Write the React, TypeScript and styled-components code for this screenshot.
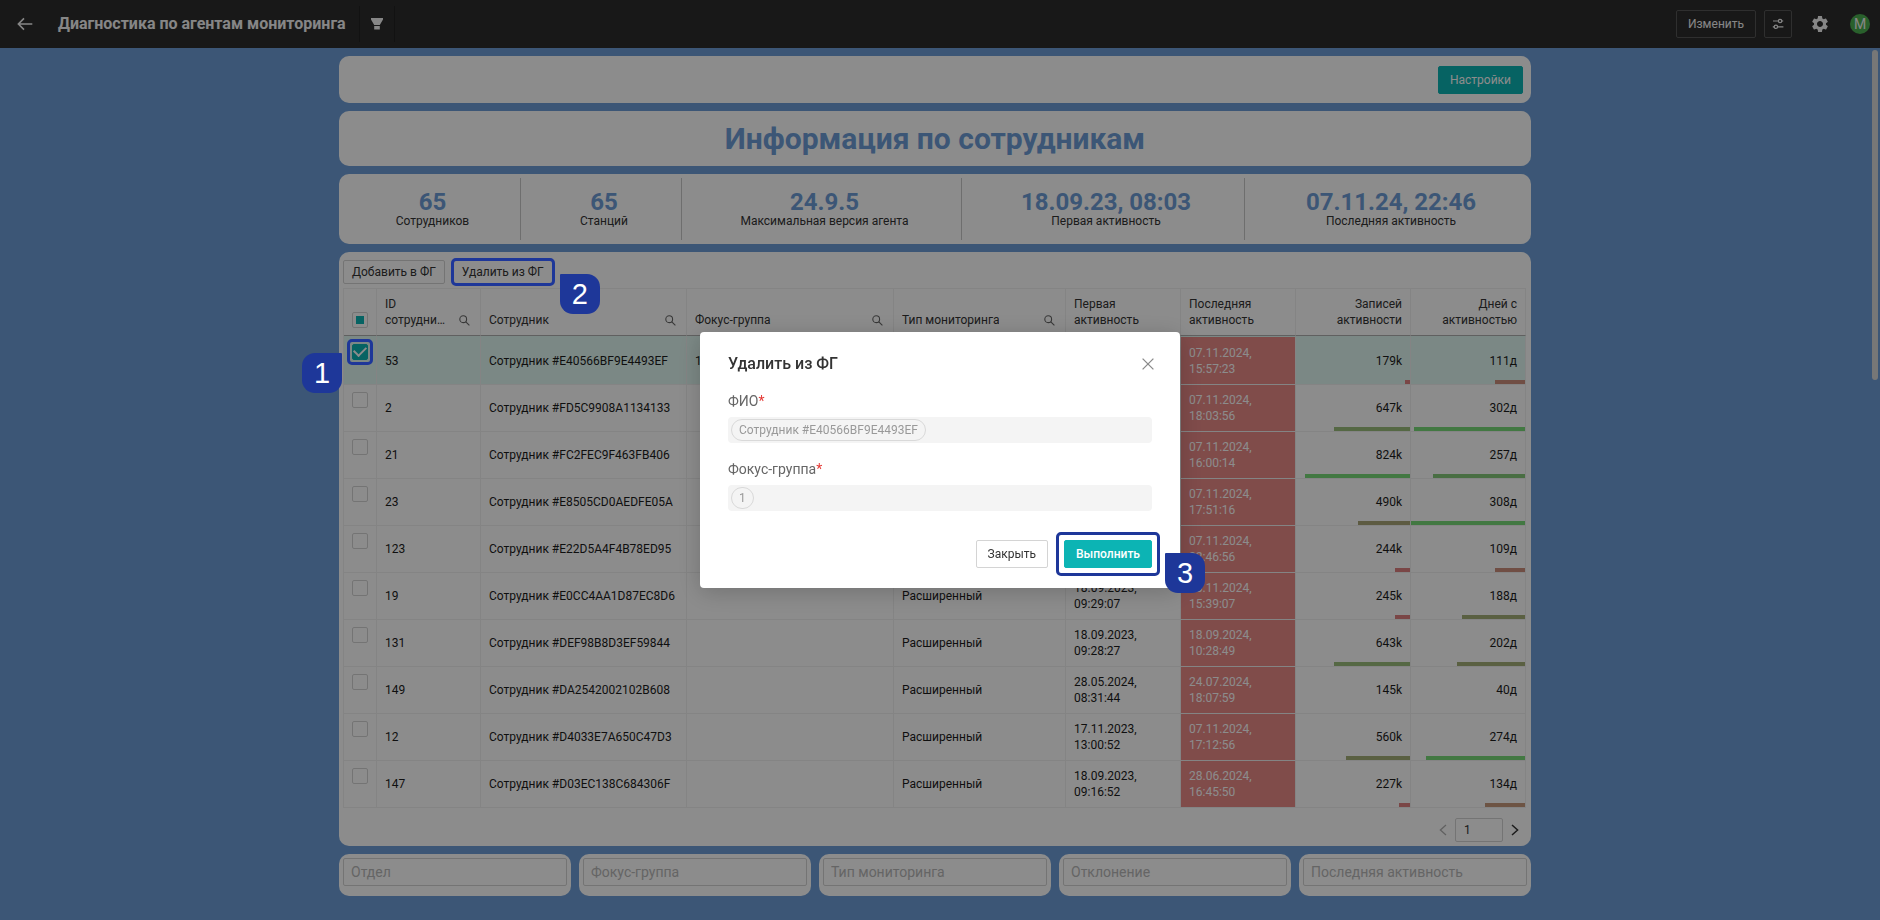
import React from 'react';
import styled, { createGlobalStyle, css } from 'styled-components';
import { MdSettings } from 'react-icons/md';

const color = {
  page: '#6d9dd7',
  header: '#2d2d2d',
  accent: '#0cb4b4',
  mark: '#1e3799',
  line: '#f0f0f0',
  border: '#d4d4d4',
  text: '#333333',
};

const GlobalStyle = createGlobalStyle`
  * { box-sizing: border-box; }
  body {
    margin: 0;
    background: ${color.page};
    color: ${color.text};
    font: 12px/16px Roboto, "Noto Sans", sans-serif;
  }
  button, input { font: inherit; color: inherit; margin: 0; }
  h1, h2, p { margin: 0; }
`;

const Page = styled.div`
  min-height: 100vh;
  display: flex;
  flex-direction: column;
`;

const Header = styled.header`
  height: 48px;
  padding: 0 10px 0 16px;
  display: flex;
  align-items: center;
  background: ${color.header};
  color: #f5f5f5;
`;

const HeaderTitle = styled.h1`
  margin: 0 13px 0 24px;
  font-size: 16px;
  line-height: 24px;
  font-weight: 700;
`;

const IconButton = styled.button`
  display: flex;
  padding: 0;
  border: 0;
  background: none;
  cursor: pointer;
`;

const FilterSlot = styled.div`
  height: 36px;
  width: 36px;
  display: flex;
  align-items: center;
  justify-content: center;
  border: solid #222222;
  border-width: 0 1px;
`;

const HeaderActions = styled.div`
  margin-left: auto;
  display: flex;
  align-items: center;
  gap: 8px;
`;

const OutlineDarkButton = styled.button<{ $square?: boolean }>`
  height: 28px;
  width: ${(p) => (p.$square ? '28px' : '80px')};
  padding: 0;
  display: flex;
  align-items: center;
  justify-content: center;
  border: 1px solid #565656;
  border-radius: 2px;
  background: none;
`;

const GearButton = styled(IconButton)`
  margin: 0 12px 0 10px;
`;

const Avatar = styled.div`
  width: 20px;
  height: 20px;
  border-radius: 50%;
  background: #4caf50;
  font-size: 14px;
  line-height: 20px;
  text-align: center;
`;

const Body = styled.div`
  flex: 1;
  display: flex;
`;

const Main = styled.main`
  flex: 1;
  max-width: 1192px;
  margin: 8px auto;
  display: flex;
  flex-direction: column;
  gap: 8px;
`;

const ScrollTrack = styled.div`
  width: 10px;
  padding: 2px;
`;

const ScrollThumb = styled.div`
  width: 6px;
  height: 330px;
  border-radius: 3px;
  background: #d9d9d9;
`;

const Card = styled.section`
  border-radius: 10px;
  background: #ffffff;
`;

const ActionCard = styled(Card)`
  padding: 10px 8px 9px;
  display: flex;
  justify-content: flex-end;
`;

const Button = styled.button<{ $primary?: boolean; $small?: boolean }>`
  height: ${(p) => (p.$small ? '24px' : '28px')};
  padding: 0 ${(p) => (p.$small ? '8px' : '11px')};
  border: 1px solid ${color.border};
  border-radius: 2px;
  background: #ffffff;
  cursor: pointer;
  ${(p) =>
    p.$primary &&
    css`
      border-color: ${color.accent};
      background: ${color.accent};
      color: #ffffff;
    `}
`;

const TitleCard = styled(Card)`
  height: 55px;
  display: flex;
  align-items: center;
  justify-content: center;
`;

const SectionTitle = styled.h2`
  font-size: 30px;
  line-height: 36px;
  font-weight: 700;
  color: ${color.page};
`;

const StatsCard = styled(Card)`
  padding: 4px 0;
  display: grid;
  grid-template-columns: 182fr 161fr 280fr 283fr 286fr;
`;

const Stat = styled.div`
  height: 62px;
  padding: 11px 0 0 6px;
  text-align: center;
  border-right: 1px solid #c8c8c8;
  &:last-child {
    border-right: 0;
  }
`;

const StatValue = styled.div`
  font-size: 24px;
  line-height: 26px;
  font-weight: 700;
  color: ${color.page};
`;

const StatLabel = styled.p`
  line-height: 12px;
`;

const TableCard = styled(Card)`
  padding: 8px 5px 4px 4px;
`;

const Toolbar = styled.div`
  display: flex;
  gap: 8px;
  margin-bottom: 4px;
`;

const Marked = styled.span`
  position: relative;
  display: inline-flex;
  vertical-align: top;
`;

const Ring = styled.span<{ $gap: number }>`
  position: absolute;
  z-index: 20;
  inset: -${(p) => p.$gap}px;
  border: 3px solid ${color.mark};
  border-radius: 5px;
  pointer-events: none;
`;

const Badge = styled.span<{ $side: 'left' | 'right' }>`
  position: absolute;
  z-index: 20;
  top: calc(100% - 10px);
  ${(p) => (p.$side === 'left' ? 'right: calc(100% + 10px);' : 'left: calc(100% + 7px);')}
  width: 40px;
  height: 40px;
  border-radius: ${(p) => (p.$side === 'left' ? '13px 1px 13px 13px' : '1px 13px 13px 13px')};
  background: ${color.mark};
  color: #ffffff;
  font: 29px/41px "Liberation Sans", sans-serif;
  text-align: center;
`;

const RowBadge = styled(Badge)`
  top: 9px;
`;

const DialogBadge = styled(Badge)`
  top: 13px;
  left: calc(100% + 13px);
`;

const Table = styled.table`
  width: 100%;
  table-layout: fixed;
  border-collapse: separate;
  border-spacing: 0;
  border: solid ${color.line};
  border-width: 1px 0 0 1px;
`;

const Th = styled.th<{ $right?: boolean }>`
  height: 47px;
  padding: 7px 8px;
  border-right: 1px solid ${color.line};
  border-bottom: 1px solid #b0b0b0;
  font-weight: 400;
  vertical-align: bottom;
  text-align: ${(p) => (p.$right ? 'right' : 'left')};
`;

const ThInner = styled.div`
  display: flex;
  align-items: flex-end;
  justify-content: space-between;
  gap: 12px;
  padding-right: 2px;
  svg {
    flex: none;
    margin-bottom: 2px;
  }
`;

const Clip = styled.span`
  overflow: hidden;
  text-overflow: ellipsis;
`;

const Td = styled.td<{ $right?: boolean; $alert?: boolean; $top?: boolean }>`
  position: relative;
  padding: 0 8px;
  border-right: 1px solid ${color.line};
  border-bottom: 1px solid ${color.line};
  color: #1c1c1c;
  text-align: ${(p) => (p.$right ? 'right' : 'left')};
  ${(p) =>
    p.$top &&
    css`
      padding-top: 7px;
      vertical-align: top;
    `}
  ${(p) =>
    p.$alert &&
    css`
      background: #e98a88;
      background-clip: padding-box;
      color: #ffffff;
    `}
`;

const Tr = styled.tr<{ $selected?: boolean }>`
  height: 47px;
  background: ${(p) => (p.$selected ? '#e1f8f2' : 'none')};
  &:first-child {
    height: 49px;
  }
  &:first-child > ${Td} {
    border-top: 1px solid transparent;
  }
`;

const Bar = styled.span`
  position: absolute;
  right: 0;
  bottom: 0;
  height: 4px;
`;

const Check = styled.input`
  appearance: none;
  display: grid;
  place-items: center;
  width: 16px;
  height: 16px;
  border: 1px solid ${color.border};
  border-radius: 2px;
  background: #ffffff;
  &:checked {
    border-color: ${color.accent};
    background: ${color.accent};
  }
  &:checked::after {
    content: '';
    width: 10px;
    height: 6px;
    margin-bottom: 4px;
    border: solid #ffffff;
    border-width: 0 0 2px 2px;
    rotate: -45deg;
  }
`;

const CheckAll = styled(Check)`
  &::after {
    content: '';
    width: 8px;
    height: 8px;
    background: ${color.accent};
  }
`;

const Pager = styled.nav`
  display: flex;
  align-items: center;
  justify-content: flex-end;
  gap: 8px;
  margin-top: 10px;
  padding-right: 7px;
`;

const PageInput = styled.input`
  width: 48px;
  height: 24px;
  padding: 0 8px;
  border: 1px solid ${color.border};
  border-radius: 2px;
  background: none;
`;

const Filters = styled.div`
  display: grid;
  grid-template-columns: repeat(5, 1fr);
  gap: 8px;
`;

const FilterCard = styled(Card)`
  padding: 4px 4px 10px;
`;

const FilterInput = styled.input`
  display: block;
  width: 100%;
  height: 28px;
  padding: 0 7px;
  border: 1px solid ${color.border};
  border-radius: 2px;
  background: none;
  font-size: 14px;
  line-height: 20px;
  &::placeholder {
    color: #b8b8b8;
    opacity: 1;
  }
`;

const Overlay = styled.div`
  position: fixed;
  inset: 0;
  z-index: 10;
  display: flex;
  align-items: center;
  justify-content: center;
  background: rgba(0, 0, 0, 0.45);
`;

const Dialog = styled.div`
  width: 480px;
  padding: 20px 28px;
  border-radius: 4px;
  background: #ffffff;
  box-shadow: 0 4px 24px rgba(0, 0, 0, 0.2);
`;

const DialogHead = styled.div`
  display: flex;
  align-items: center;
  justify-content: space-between;
  margin-bottom: 15px;
`;

const DialogTitle = styled.h2`
  font-size: 16px;
  line-height: 24px;
  font-weight: 500;
`;

const CloseButton = styled(IconButton)`
  margin-right: -2px;
`;

const Field = styled.div`
  margin-bottom: 16px;
`;

const FieldLabel = styled.div`
  margin-bottom: 6px;
  font-size: 14px;
  line-height: 20px;
  color: #666666;
  em {
    font-style: normal;
    color: #e53935;
  }
`;

const TagBox = styled.div`
  display: flex;
  padding: 2px 3px;
  border-radius: 4px;
  background: #f4f4f4;
`;

const Tag = styled.span`
  padding: 2px 7px;
  border: 1px solid #d9d9d9;
  border-radius: 11px;
  color: #999999;
  line-height: 16px;
`;

const DialogActions = styled.div`
  display: flex;
  justify-content: flex-end;
  gap: 16px;
  margin-top: 29px;
`;

const BoldButton = styled(Button)`
  width: 88px;
  font-weight: 500;
`;

const SearchIcon = () => (
  <svg width="11" height="11" viewBox="0 0 11 11" fill="none" stroke="#666666" strokeWidth="1.1" aria-hidden="true">
    <circle cx="4.2" cy="4.2" r="3.4" />
    <path d="M6.8 6.8 10.4 10.4" />
  </svg>
);

type Row = {
  id: string;
  code: string;
  group?: string;
  first: string;
  last: string;
  records: [string, number, string];
  days: [string, number, string];
};

const RED = '#df8080';
const BROWN = '#cc8e7c';
const SAND = '#c69a7c';
const OLIVE = '#a9a778';
const KHAKI = '#a5b078';
const MOSS = '#9cbd7c';
const LEAF = '#86c87a';
const GREEN = '#78da78';

const rows: Row[] = [
  { id: '53', code: 'E40566BF9E4493EF', group: '1', first: '18.09.2023, 08:03:12', last: '07.11.2024, 15:57:23', records: ['179k', 4, RED], days: ['111д', 26, BROWN] },
  { id: '2', code: 'FD5C9908A1134133', first: '18.09.2023, 09:11:20', last: '07.11.2024, 18:03:56', records: ['647k', 67, MOSS], days: ['302д', 97, GREEN] },
  { id: '21', code: 'FC2FEC9F463FB406', first: '18.09.2023, 09:12:41', last: '07.11.2024, 16:00:14', records: ['824k', 92, GREEN], days: ['257д', 81, LEAF] },
  { id: '23', code: 'E8505CD0AEDFE05A', first: '18.09.2023, 09:15:02', last: '07.11.2024, 17:51:16', records: ['490k', 46, OLIVE], days: ['308д', 100, GREEN] },
  { id: '123', code: 'E22D5A4F4B78ED95', first: '18.09.2023, 09:20:33', last: '07.11.2024, 22:46:56', records: ['244k', 13, RED], days: ['109д', 26, BROWN] },
  { id: '19', code: 'E0CC4AA1D87EC8D6', first: '18.09.2023, 09:29:07', last: '08.11.2024, 15:39:07', records: ['245k', 13, RED], days: ['188д', 55, KHAKI] },
  { id: '131', code: 'DEF98B8D3EF59844', first: '18.09.2023, 09:28:27', last: '18.09.2024, 10:28:49', records: ['643k', 67, MOSS], days: ['202д', 60, KHAKI] },
  { id: '149', code: 'DA2542002102B608', first: '28.05.2024, 08:31:44', last: '24.07.2024, 18:07:59', records: ['145k', 0, RED], days: ['40д', 0, RED] },
  { id: '12', code: 'D4033E7A650C47D3', first: '17.11.2023, 13:00:52', last: '07.11.2024, 17:12:56', records: ['560k', 56, KHAKI], days: ['274д', 87, GREEN] },
  { id: '147', code: 'D03EC138C684306F', first: '18.09.2023, 09:16:52', last: '28.06.2024, 16:45:50', records: ['227k', 10, RED], days: ['134д', 35, SAND] },
];

const stats = [
  ['65', 'Сотрудников'],
  ['65', 'Станций'],
  ['24.9.5', 'Максимальная версия агента'],
  ['18.09.23, 08:03', 'Первая активность'],
  ['07.11.24, 22:46', 'Последняя активность'],
];

const columns = [
  { title: 'ID сотрудника', width: 104, search: true },
  { title: 'Сотрудник', width: 206, search: true },
  { title: 'Фокус-группа', width: 207, search: true },
  { title: 'Тип мониторинга', width: 172, search: true },
  { title: 'Первая активность', width: 115 },
  { title: 'Последняя активность', width: 115 },
  { title: 'Записей активности', width: 115, right: true },
  { title: 'Дней с активностью', width: 115, right: true },
];

const filters = ['Отдел', 'Фокус-группа', 'Тип мониторинга', 'Отклонение', 'Последняя активность'];

const Metric = ({ value }: { value: [string, number, string] }) => (
  <Td $right>
    {value[0]}
    <Bar style={{ width: `${value[1]}%`, background: value[2] }} />
  </Td>
);

export default function App() {
  return (
    <>
      <GlobalStyle />
      <Page>
        <Header>
          <IconButton aria-label="Назад">
            <svg width="18" height="18" viewBox="0 0 18 18" fill="none" stroke="currentColor" strokeWidth="1.6">
              <path d="M16.3 9H2.6M8 3.4 2.4 9 8 14.6" />
            </svg>
          </IconButton>
          <HeaderTitle>Диагностика по агентам мониторинга</HeaderTitle>
          <FilterSlot>
            <IconButton aria-label="Фильтр">
              <svg width="14" height="14" viewBox="0 0 14 14" fill="currentColor">
                <path d="M1 1h12v1.6L9.8 8H4.2L1 2.6ZM4.2 9h5.6v3.6H4.2Z" />
              </svg>
            </IconButton>
          </FilterSlot>
          <HeaderActions>
            <OutlineDarkButton>Изменить</OutlineDarkButton>
            <OutlineDarkButton $square aria-label="Параметры">
              <svg width="12" height="12" viewBox="0 0 12 12" fill="none" stroke="currentColor" strokeWidth="1.2">
                <path d="M1 3h5.4M9.8 3h1.4M0.8 8.8h1.4M5.6 8.8H11.4" />
                <circle cx="8.1" cy="3" r="1.7" />
                <circle cx="3.9" cy="8.8" r="1.7" />
              </svg>
            </OutlineDarkButton>
            <GearButton aria-label="Настройки системы">
              <MdSettings size={20} />
            </GearButton>
            <Avatar>M</Avatar>
          </HeaderActions>
        </Header>

        <Body>
          <Main>
            <ActionCard>
              <Button $primary>Настройки</Button>
            </ActionCard>

            <TitleCard>
              <SectionTitle>Информация по сотрудникам</SectionTitle>
            </TitleCard>

            <StatsCard>
              {stats.map(([value, label]) => (
                <Stat key={label}>
                  <StatValue>{value}</StatValue>
                  <StatLabel>{label}</StatLabel>
                </Stat>
              ))}
            </StatsCard>

            <TableCard>
              <Toolbar>
                <Button $small>Добавить в ФГ</Button>
                <Marked>
                  <Button $small>Удалить из ФГ</Button>
                  <Ring $gap={2} />
                  <Badge $side="right">2</Badge>
                </Marked>
              </Toolbar>

              <Table>
                <colgroup>
                  <col width="33" />
                  {columns.map((c) => (
                    <col key={c.title} width={c.width} />
                  ))}
                </colgroup>
                <thead>
                  <tr>
                    <Th>
                      <CheckAll type="checkbox" aria-label="Выбрать все" />
                    </Th>
                    {columns.map((c) => (
                      <Th key={c.title} $right={c.right}>
                        {c.search ? (
                          <ThInner>
                            <Clip>{c.title}</Clip>
                            <SearchIcon />
                          </ThInner>
                        ) : (
                          c.title
                        )}
                      </Th>
                    ))}
                  </tr>
                </thead>
                <tbody>
                  {rows.map((r, i) => (
                    <Tr key={r.id} $selected={i === 0}>
                      <Td $top>
                        <Marked>
                          <Check type="checkbox" defaultChecked={i === 0} aria-label={`Выбрать ${r.id}`} />
                          {i === 0 && (
                            <>
                              <Ring $gap={5} />
                              <RowBadge $side="left">1</RowBadge>
                            </>
                          )}
                        </Marked>
                      </Td>
                      <Td>{r.id}</Td>
                      <Td>Сотрудник #{r.code}</Td>
                      <Td>{r.group}</Td>
                      <Td>Расширенный</Td>
                      <Td>{r.first}</Td>
                      <Td $alert>{r.last}</Td>
                      <Metric value={r.records} />
                      <Metric value={r.days} />
                    </Tr>
                  ))}
                </tbody>
              </Table>

              <Pager aria-label="Страницы">
                <IconButton aria-label="Предыдущая страница">
                  <svg width="8" height="12" viewBox="0 0 8 12" fill="none" stroke="#b0b0b0" strokeWidth="1.3">
                    <path d="M7 1 1.4 6 7 11" />
                  </svg>
                </IconButton>
                <PageInput defaultValue="1" aria-label="Номер страницы" />
                <IconButton aria-label="Следующая страница">
                  <svg width="8" height="12" viewBox="0 0 8 12" fill="none" stroke="#333333" strokeWidth="1.5">
                    <path d="M1 1 6.6 6 1 11" />
                  </svg>
                </IconButton>
              </Pager>
            </TableCard>

            <Filters>
              {filters.map((f) => (
                <FilterCard key={f}>
                  <FilterInput placeholder={f} aria-label={f} />
                </FilterCard>
              ))}
            </Filters>
          </Main>
          <ScrollTrack>
            <ScrollThumb />
          </ScrollTrack>
        </Body>
      </Page>

      <Overlay>
        <Dialog role="dialog" aria-modal="true" aria-labelledby="dialog-title">
          <DialogHead>
            <DialogTitle id="dialog-title">Удалить из ФГ</DialogTitle>
            <CloseButton aria-label="Закрыть окно">
              <svg width="12" height="12" viewBox="0 0 12 12" fill="none" stroke="#8a8a8a" strokeWidth="1.3">
                <path d="M0.6 0.6 11.4 11.4M11.4 0.6 0.6 11.4" />
              </svg>
            </CloseButton>
          </DialogHead>
          <Field role="group" aria-labelledby="label-name">
            <FieldLabel id="label-name">
              ФИО<em>*</em>
            </FieldLabel>
            <TagBox>
              <Tag>Сотрудник #E40566BF9E4493EF</Tag>
            </TagBox>
          </Field>
          <Field role="group" aria-labelledby="label-group">
            <FieldLabel id="label-group">
              Фокус-группа<em>*</em>
            </FieldLabel>
            <TagBox>
              <Tag>1</Tag>
            </TagBox>
          </Field>
          <DialogActions>
            <Button>Закрыть</Button>
            <Marked>
              <BoldButton $primary>Выполнить</BoldButton>
              <Ring $gap={8} />
              <DialogBadge $side="right">3</DialogBadge>
            </Marked>
          </DialogActions>
        </Dialog>
      </Overlay>
    </>
  );
}
